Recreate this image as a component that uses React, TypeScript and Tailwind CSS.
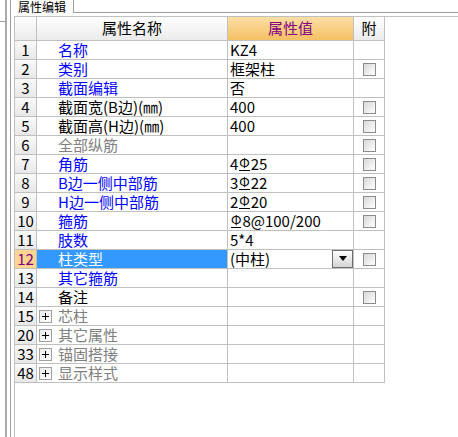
import React from 'react';

type Tone = 'blue' | 'black' | 'gray';

interface Row {
  no: string;
  name: string;
  tone: Tone;
  value?: React.ReactNode;
  check?: boolean;
  group?: boolean;
  selected?: boolean;
  dropdown?: boolean;
}

// rebar grade symbol, approximated with Φ + base stroke
const Bar = () => (
  <span className="mx-[1px] inline-block border-b border-black align-top text-[13px] leading-[15px]">Φ</span>
);

const rows: Row[] = [
  { no: '1', name: '名称', tone: 'blue', value: 'KZ4' },
  { no: '2', name: '类别', tone: 'blue', value: '框架柱', check: true },
  { no: '3', name: '截面编辑', tone: 'blue', value: '否' },
  { no: '4', name: '截面宽(B边)(㎜)', tone: 'black', value: '400', check: true },
  { no: '5', name: '截面高(H边)(㎜)', tone: 'black', value: '400', check: true },
  { no: '6', name: '全部纵筋', tone: 'gray', check: true },
  { no: '7', name: '角筋', tone: 'blue', value: <>4<Bar />25</>, check: true },
  { no: '8', name: 'B边一侧中部筋', tone: 'blue', value: <>3<Bar />22</>, check: true },
  { no: '9', name: 'H边一侧中部筋', tone: 'blue', value: <>2<Bar />20</>, check: true },
  { no: '10', name: '箍筋', tone: 'blue', value: <><Bar />8@100/200</>, check: true },
  { no: '11', name: '肢数', tone: 'blue', value: '5*4' },
  { no: '12', name: '柱类型', tone: 'blue', value: '(中柱)', check: true, selected: true, dropdown: true },
  { no: '13', name: '其它箍筋', tone: 'blue' },
  { no: '14', name: '备注', tone: 'black', check: true },
  { no: '15', name: '芯柱', tone: 'gray', group: true },
  { no: '20', name: '其它属性', tone: 'gray', group: true },
  { no: '33', name: '锚固搭接', tone: 'gray', group: true },
  { no: '48', name: '显示样式', tone: 'gray', group: true },
];

const toneClass: Record<Tone, string> = {
  blue: 'text-[#0000ff]',
  black: 'text-black',
  gray: 'text-[#808080]',
};

function CheckBox() {
  return (
    <span className="block h-[13px] w-[13px] border border-[#8c8c8c] bg-gradient-to-br from-[#d8d8d8] to-white" />
  );
}

function Expander() {
  return (
    <span className="mt-[3px] flex h-[13px] w-[13px] items-center justify-center border border-[#a0a0a0] bg-gradient-to-br from-[#ececec] to-white">
      <span className="relative block h-[7px] w-[7px]">
        <span className="absolute left-0 top-[3px] h-[1px] w-[7px] bg-black" />
        <span className="absolute left-[3px] top-0 h-[7px] w-[1px] bg-black" />
      </span>
    </span>
  );
}

function DropButton() {
  return (
    <span className="flex h-[18px] w-[21px] shrink-0 items-center justify-center border border-[#6e6e6e] bg-gradient-to-b from-white to-[#d4d4d4]">
      <span className="-mt-[2px] block h-0 w-0 border-l-[4px] border-r-[4px] border-t-[5px] border-l-transparent border-r-transparent border-t-black" />
    </span>
  );
}

function PropertyGrid() {
  const cell = 'border-b border-r border-[#c0c0c0]';
  return (
    <div className="grid w-[370px] grid-cols-[22px_191px_126px_31px]">
      {/* header */}
      <div className={`${cell} h-[24px] bg-gradient-to-b from-white to-[#ebebeb]`} />
      <div className={`${cell} flex h-[24px] items-center justify-center bg-gradient-to-b from-white to-[#ebebeb]`}>
        属性名称
      </div>
      <div className={`${cell} flex h-[24px] items-center justify-center bg-gradient-to-b from-[#fcdfa6] to-[#f4c062] text-[#800080]`}>
        属性值
      </div>
      <div className={`${cell} flex h-[24px] items-center justify-center bg-gradient-to-b from-white to-[#ebebeb]`}>
        附
      </div>

      {rows.map((r) => (
        <React.Fragment key={r.no}>
          <div
            className={`${cell} h-[19px] text-center leading-[18px] ${
              r.selected
                ? 'bg-[#fdd591] text-[#800080]'
                : 'bg-gradient-to-b from-[#fafafa] to-[#e8e8e8]'
            }`}
          >
            {r.no}
          </div>
          <div
            className={`${cell} flex h-[19px] leading-[18px] ${
              r.selected ? 'bg-[#3399ff] text-white' : toneClass[r.tone]
            } ${r.group ? 'pl-[2px]' : 'pl-[21px]'}`}
          >
            {r.group && <Expander />}
            <span className={r.group ? 'pl-[6px]' : ''}>{r.name}</span>
          </div>
          <div className={`${cell} flex h-[19px] items-start justify-between pl-[2px] leading-[18px]`}>
            <span className="whitespace-nowrap">{r.value}</span>
            {r.dropdown && <DropButton />}
          </div>
          <div className={`${cell} flex h-[19px] items-center justify-center`}>
            {r.check && <CheckBox />}
          </div>
        </React.Fragment>
      ))}
    </div>
  );
}

export default function App() {
  return (
    <div className="flex h-[437px] w-[458px] overflow-hidden bg-white font-['Noto_Sans_CJK_SC',sans-serif] text-[15px] text-black">
      {/* outer frame lines on the left */}
      <div className="w-[5px] shrink-0">
        <div className="h-[22px] border-b border-[#a0a0a0]" />
      </div>
      <div className="w-[2px] shrink-0 bg-[#a8a8a8]" />
      <div className="w-[3px] shrink-0" />

      <div className="flex min-w-0 flex-1 flex-col border-l border-[#a0a0a0]">
        {/* tab strip */}
        <div className="flex h-[13px] shrink-0">
          <div className="w-[63px] border-r border-[#a0a0a0] text-center text-[12px] leading-[13px]">
            属性编辑
          </div>
          <div className="flex-1 border-b border-[#a0a0a0]" />
        </div>
        <div className="h-[3px] shrink-0" />

        {/* panel */}
        <div className="ml-[3px] flex-1 border-l border-t border-[#c0c0c0]">
          <PropertyGrid />
        </div>
      </div>
    </div>
  );
}
